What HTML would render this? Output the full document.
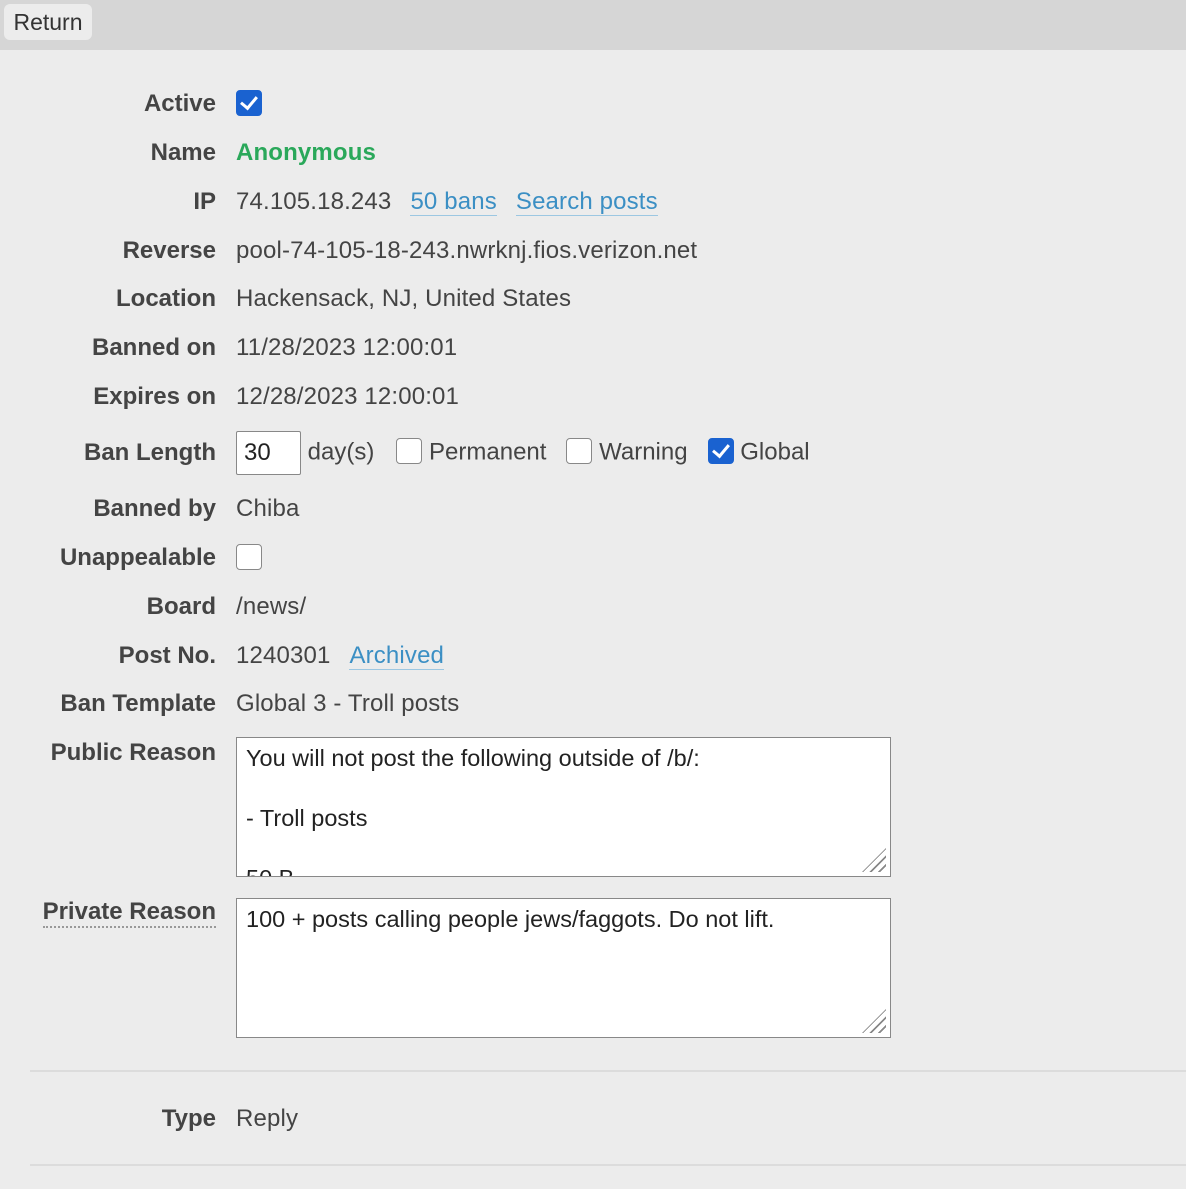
<!DOCTYPE html>
<html><head><meta charset="utf-8"><style>
html,body{margin:0;padding:0}
body{width:1186px;height:1189px;background:#ececec;font-family:"Liberation Sans",Arial,sans-serif;font-size:24px;color:#444;position:relative;overflow:hidden}
.hdr{position:absolute;left:0;top:0;width:1186px;height:50px;background:#d6d6d6}
.btn{position:absolute;left:4px;top:4px;width:88px;height:36px;background:#ececec;border-radius:6px;line-height:36px;text-align:center;color:#333;font-size:23px}
.l{position:absolute;right:970px;font-weight:bold;color:#444;white-space:nowrap;transform:translateY(-50%);margin-top:1px}
.v{position:absolute;left:236px;white-space:nowrap;transform:translateY(-50%);margin-top:1px;letter-spacing:0.15px}
a{color:#3b8fc4;text-decoration:none;border-bottom:1px solid #9cc7e2}
.cb{display:inline-block;width:26px;height:26px;border:1.5px solid #888;border-radius:4px;background:#fff;box-sizing:border-box;vertical-align:middle;position:relative;top:-2px}
.cb.on{background:#1a62d0;border-color:#1a62d0}
.cb.on:after{content:"";position:absolute;left:7px;top:2px;width:7px;height:13px;border:solid #fff;border-width:0 3px 3px 0;transform:rotate(40deg)}
.ta{position:absolute;left:236px;width:655px;background:#fff;border:1px solid #888;box-sizing:border-box;padding:5px 9px;line-height:30px;color:#222;overflow:hidden;font-size:23.5px}
.hr{position:absolute;left:30px;width:1156px;height:2px;background:#dcdcdc}
.grip{position:absolute;right:4px;bottom:4px;width:24px;height:24px;background:repeating-linear-gradient(135deg,transparent 0 4px,#888 4px 6px);clip-path:polygon(100% 0,100% 100%,0 100%)}
.g{display:inline-block}
</style></head><body>
<div class="hdr"><div class="btn">Return</div></div>
<div class="l" style="top:103px">Active</div><div class="v" style="top:103px"><span class="cb on"></span></div>
<div class="l" style="top:152px">Name</div><div class="v" style="top:152px;color:#2aa85a;font-weight:bold">Anonymous</div>
<div class="l" style="top:201px">IP</div><div class="v" style="top:201px">74.105.18.243<span class="g" style="width:19px"></span><a>50 bans</a><span class="g" style="width:19px"></span><a>Search posts</a></div>
<div class="l" style="top:250px">Reverse</div><div class="v" style="top:250px">pool-74-105-18-243.nwrknj.fios.verizon.net</div>
<div class="l" style="top:298px">Location</div><div class="v" style="top:298px">Hackensack, NJ, United States</div>
<div class="l" style="top:347px">Banned on</div><div class="v" style="top:347px">11/28/2023 12:00:01</div>
<div class="l" style="top:396px">Expires on</div><div class="v" style="top:396px">12/28/2023 12:00:01</div>
<div class="l" style="top:452px">Ban Length</div>
<div class="v" style="top:452px;letter-spacing:0"><span style="display:inline-block;width:65px;height:44px;background:#fff;border:1px solid #888;box-sizing:border-box;line-height:42px;padding-left:7px;color:#222;vertical-align:middle;border-radius:2px">30</span> day(s)<span class="g" style="width:22px"></span><span class="cb"></span> Permanent<span class="g" style="width:20px"></span><span class="cb"></span> Warning<span class="g" style="width:20px"></span><span class="cb on"></span> Global</div>
<div class="l" style="top:508px">Banned by</div><div class="v" style="top:508px">Chiba</div>
<div class="l" style="top:557px">Unappealable</div><div class="v" style="top:557px"><span class="cb"></span></div>
<div class="l" style="top:606px">Board</div><div class="v" style="top:606px">/news/</div>
<div class="l" style="top:655px">Post No.</div><div class="v" style="top:655px">1240301<span class="g" style="width:19px"></span><a>Archived</a></div>
<div class="l" style="top:703px">Ban Template</div><div class="v" style="top:703px">Global 3 - Troll posts</div>
<div class="l" style="top:752px">Public Reason</div>
<div class="ta" style="top:737px;height:140px">You will not post the following outside of /b/:<br><br>- Troll posts<br><br>50 B<div class="grip"></div></div>
<div class="l" style="top:912px;border-bottom:2px dotted #999">Private Reason</div>
<div class="ta" style="top:898px;height:140px">100 + posts calling people jews/faggots. Do not lift.<div class="grip"></div></div>
<div class="hr" style="top:1070px"></div>
<div class="l" style="top:1118px">Type</div><div class="v" style="top:1118px">Reply</div>
<div class="hr" style="top:1164px"></div>
</body></html>
